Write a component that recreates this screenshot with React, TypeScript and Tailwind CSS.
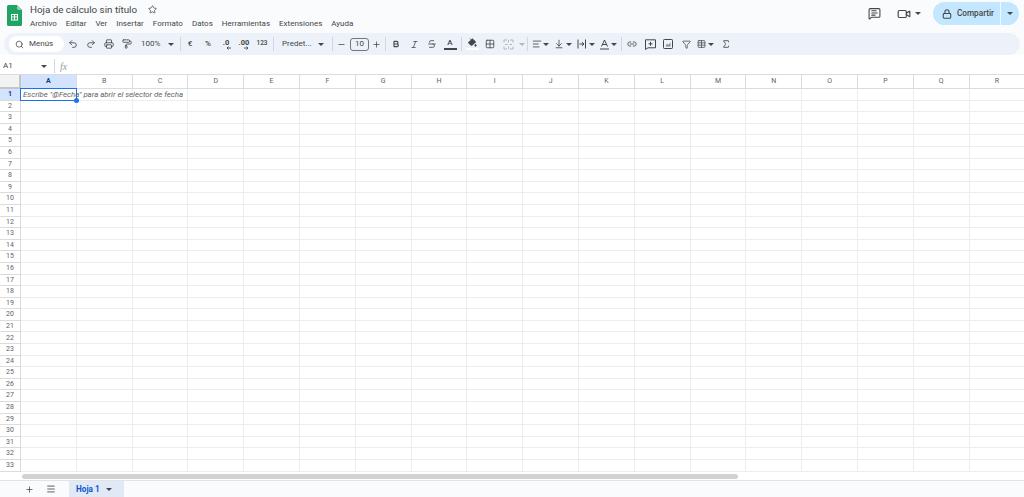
import {
  Undo2, Redo2, Printer, PaintRoller, Search, Star, Bold, Italic, Strikethrough, PaintBucket, Grid2x2,
  AlignLeft, ArrowDownToLine, Link2, Filter, Table, Sigma, Minus, Plus, Lock, Video, MessageSquareText, Menu,
} from "lucide-react";
import type { ReactNode } from "react";

const font = "font-['Roboto','Liberation_Sans',sans-serif]";
const columns = "ABCDEFGHIJKLMNOPQR".split("");
const rows = Array.from({ length: 33 }, (_, i) => i + 1);
const menus = ["Archivo", "Editar", "Ver", "Insertar", "Formato", "Datos", "Herramientas", "Extensiones", "Ayuda"];

function Caret({ className = "" }: { className?: string }) {
  return <span className={`h-0 w-0 shrink-0 border-x-[3px] border-t-[3px] border-x-transparent border-t-[#444746] ${className}`} />;
}

function Tool({ w = "w-[18px]", children }: { w?: string; children: ReactNode }) {
  return <div className={`flex h-4 shrink-0 items-center justify-center text-[#444746] ${w}`}>{children}</div>;
}

function Sep({ className = "" }: { className?: string }) {
  return <div className={`h-[14px] w-px shrink-0 bg-[#d3d6da] ${className}`} />;
}

function SheetsLogo() {
  return (
    <svg width="15" height="21" viewBox="0 0 15 21" className="shrink-0">
      <path d="M1.5 0H10l5 5v14.5a1.5 1.5 0 0 1-1.5 1.5h-12A1.5 1.5 0 0 1 0 19.5v-18A1.5 1.5 0 0 1 1.5 0Z" fill="#1fa463" />
      <path d="M10 0l5 5h-3.6A1.4 1.4 0 0 1 10 3.6Z" fill="#8ed1b1" />
      <path d="M4 9h7v6.5H4Zm1 1v1.6h2V10Zm3 0v1.6h2V10Zm-3 2.6v1.9h2v-1.9Zm3 0v1.9h2v-1.9Z" fill="#fff" fillRule="evenodd" />
    </svg>
  );
}

function DecimalIcon({ label, arrow }: { label: string; arrow: "left" | "right" }) {
  return (
    <div className="relative flex h-[12px] w-[14px] justify-center">
      <span className="text-[7.5px] font-bold leading-[9px]">{label}</span>
      <svg width="5" height="4" viewBox="0 0 5 4" className="absolute bottom-0 right-[2px]" fill="none" stroke="currentColor" strokeWidth="0.9">
        {arrow === "left" ? <path d="M5 2H1M2.500.5 1 2l1.500 1.500" /> : <path d="M0 2h4M2.500.5 4 2 2.500 3.500" />}
      </svg>
    </div>
  );
}

function MergeIcon() {
  return (
    <svg width="11" height="11" viewBox="0 0 11 11" fill="none" stroke="#b4b6b8" strokeWidth="1">
      <path d="M1 3.500V1h3M7 1h3v2.500M10 7.500V10H7M4 10H1V7.500" />
      <path d="M5.500 1v2.500M5.500 7.500V10M2 5.500h2.500M6.500 5.500H9" />
    </svg>
  );
}

function WrapIcon() {
  return (
    <svg width="10" height="10" viewBox="0 0 10 10" fill="none" stroke="currentColor" strokeWidth="1">
      <path d="M1 .5v9M8.500 .5v9M2.500 5h4.500M5 3.200 7 5 5 6.800" />
    </svg>
  );
}

function RotateIcon() {
  return (
    <svg width="11" height="11" viewBox="0 0 11 11" fill="none" stroke="currentColor" strokeWidth="1">
      <path d="M2.500 7.500 5.500 1l3 6.500M3.500 5.500h4M1 10h9" />
    </svg>
  );
}

function CommentIcon() {
  return (
    <svg width="11" height="11" viewBox="0 0 11 11" fill="none" stroke="currentColor" strokeWidth="1">
      <path d="M.5.800h10v8H3L.5 10.500ZM5.500 2.800v4M3.500 4.800h4" />
    </svg>
  );
}

function ChartIcon() {
  return (
    <svg width="10" height="10" viewBox="0 0 10 10" fill="none" stroke="currentColor" strokeWidth="1">
      <rect x=".5" y=".5" width="9" height="9" rx=".8" />
      <path d="M2.500 7.500l1.500-3 1.200 1.500L7.500 3.500v4Z" fill="currentColor" fillOpacity="0.6" stroke="none" />
    </svg>
  );
}

function Header() {
  return (
    <header className="flex h-[32px] shrink-0">
      <div className="ml-[7px] mt-[5px]">
        <SheetsLogo />
      </div>
      <div className="ml-[8px] flex flex-col">
        <div className="mt-[2px] flex h-[15px] items-center">
          <span className="text-[9.8px] leading-none text-[#444746]">Hoja de cálculo sin título</span>
          <Star size={9} strokeWidth={2} className="ml-[11px] text-[#444746]" />
        </div>
        <nav className="flex h-[13px] items-center gap-[9px] text-[8px] text-[#444746]">
          {menus.map((m) => (
            <span key={m}>{m}</span>
          ))}
        </nav>
      </div>
      <div className="ml-auto mr-[5px] mt-[2px] flex h-[23px] items-center">
        <MessageSquareText size={13} className="text-[#444746]" />
        <Video size={14} className="ml-[16px] text-[#444746]" />
        <Caret className="ml-[4px]" />
        <div className="ml-[12px] flex h-[23px] w-[86px] items-center rounded-full bg-[#c2e7ff] text-[8.2px] font-medium text-[#444746]">
          <Lock size={10} strokeWidth={2.5} className="ml-[9px]" />
          <span className="ml-[5px]">Compartir</span>
          <div className="ml-auto flex h-full w-[19px] items-center justify-center border-l border-white/70">
            <Caret />
          </div>
        </div>
      </div>
    </header>
  );
}

function Toolbar() {
  const s = 10;
  return (
    <div className="mx-[4px] mt-[1px] flex h-[22px] shrink-0 items-center rounded-[11px] bg-[#edf2fa] pl-[5px] text-[#444746]">
      <div className="flex h-[16px] w-[55px] shrink-0 items-center rounded-full bg-white pl-[6px] text-[8px]">
        <Search size={9} />
        <span className="ml-[5px]">Menús</span>
      </div>
      <Tool><Undo2 size={s} /></Tool>
      <Tool><Redo2 size={s} /></Tool>
      <Tool><Printer size={s} /></Tool>
      <Tool><PaintRoller size={s} /></Tool>
      <div className="ml-[5px] flex w-[36px] shrink-0 items-center text-[8px]">
        <span className="w-[21px]">100%</span>
        <Caret className="ml-[6px]" />
      </div>
      <Sep className="ml-[3px]" />
      <Tool><span className="text-[8px] font-medium">€</span></Tool>
      <Tool><span className="text-[8px] font-medium">%</span></Tool>
      <Tool><DecimalIcon label=".0" arrow="left" /></Tool>
      <Tool><DecimalIcon label=".00" arrow="right" /></Tool>
      <Tool><span className="text-[6.5px] font-medium">123</span></Tool>
      <Sep className="ml-[2px] mr-[8px]" />
      <div className="flex w-[50px] shrink-0 items-center text-[8px]">
        <span className="w-[31px] whitespace-nowrap">Predet...</span>
        <Caret className="ml-[5px]" />
      </div>
      <Sep />
      <Tool w="w-[16px]"><Minus size={9} /></Tool>
      <div className="ml-[1px] flex h-[13px] w-[19px] shrink-0 items-center justify-center rounded-[3px] border border-[#747775] text-[8px]">10</div>
      <Tool w="w-[15px]"><Plus size={9} /></Tool>
      <Sep className="ml-[1px] mr-[1px]" />
      <Tool><Bold size={8} strokeWidth={3.5} /></Tool>
      <Tool><Italic size={9} /></Tool>
      <Tool><Strikethrough size={s} /></Tool>
      <Tool>
        <div className="flex flex-col items-center text-[8px] font-medium leading-none">
          <span>A</span>
          <span className="mt-[1px] h-[2px] w-[13px] bg-[#444746]" />
        </div>
      </Tool>
      <Sep className="ml-[2px] mr-[1px]" />
      <Tool>
        <div className="flex flex-col items-center">
          <PaintBucket size={9} fill="#444746" />
          <span className="mt-[1px] h-[2px] w-[13px] bg-white" />
        </div>
      </Tool>
      <Tool><Grid2x2 size={s} /></Tool>
      <Tool><MergeIcon /></Tool>
      <Caret className="ml-[2px] border-t-[#b4b6b8]" />
      <Sep className="ml-[2px] mr-[4px]" />
      <div className="flex w-[22px] shrink-0 items-center"><AlignLeft size={s} /><Caret className="ml-[1px]" /></div>
      <div className="flex w-[23px] shrink-0 items-center"><ArrowDownToLine size={s} /><Caret className="ml-[2px]" /></div>
      <div className="flex w-[22px] shrink-0 items-center"><WrapIcon /><Caret className="ml-[2px]" /></div>
      <div className="flex w-[18px] shrink-0 items-center"><RotateIcon /><Caret className="ml-[1px]" /></div>
      <Sep className="ml-[4px] mr-[1px]" />
      <Tool><Link2 size={s} /></Tool>
      <Tool><CommentIcon /></Tool>
      <Tool><ChartIcon /></Tool>
      <Tool><Filter size={9} /></Tool>
      <div className="flex w-[19px] shrink-0 items-center pl-[2px]"><Table size={s} /><Caret className="ml-[2px]" /></div>
      <Tool w="w-[24px]"><Sigma size={s} /></Tool>
    </div>
  );
}

function FormulaBar() {
  return (
    <div className="mt-[3px] flex h-[16px] shrink-0 items-center text-[#444746]">
      <span className="ml-[3px] w-[38px] text-[8px]">A1</span>
      <Caret />
      <Sep className="ml-[7px] mr-[5px]" />
      <span className="font-['Liberation_Serif',serif] text-[10px] italic text-[#9aa0a6]">fx</span>
    </div>
  );
}

function Grid() {
  return (
    <div className="flex min-h-0 flex-1 flex-col overflow-hidden border-t border-[#dadce0]">
      <div className="flex h-[14px] shrink-0">
        <div className="w-[21px] shrink-0 border-b-[2px] border-r-[2px] border-[#c4c7c5] bg-[#f1f3f4]" />
        {columns.map((c, i) => (
          <div
            key={c}
            className={`flex w-[55.8px] shrink-0 items-center justify-center border-b border-r border-[#dadce0] text-[7px] ${
              i === 0 ? "bg-[#d3e3fd] font-bold text-[#0b3c8c]" : "text-[#5f6368]"
            }`}
          >
            {c}
          </div>
        ))}
      </div>
      {rows.map((r) => (
        <div key={r} className="flex h-[11.6px] shrink-0">
          <div
            className={`flex w-[21px] shrink-0 items-center justify-center border-b border-r border-[#dadce0] text-[7px] ${
              r === 1 ? "bg-[#d3e3fd] font-bold text-[#0b3c8c]" : "text-[#5f6368]"
            }`}
          >
            {r}
          </div>
          {columns.map((c, i) => (
            <div key={c} className="relative w-[55.8px] shrink-0 border-b border-r border-[#ebedef]">
              {r === 1 && i === 0 && (
                <>
                  <div className="absolute -left-px -top-px z-10 h-[12.6px] w-[56.8px] border-[1.5px] border-[#1a73e8]" />
                  <div className="absolute -bottom-[3px] -right-[3px] z-20 h-[5px] w-[5px] rounded-full bg-[#1a73e8]" />
                  <span className="absolute left-[2px] top-0 z-20 whitespace-nowrap text-[7.8px] italic leading-[11px] text-[#5f6368]">
                    Escribe "@Fecha" para abrir el selector de fecha
                  </span>
                </>
              )}
            </div>
          ))}
        </div>
      ))}
    </div>
  );
}

function Bottom() {
  return (
    <>
      <div className="flex h-[8px] shrink-0 items-center pl-[22px]">
        <div className="h-[5px] w-[716px] rounded-full bg-[#d0d2d4]" />
      </div>
      <div className="flex h-[17px] shrink-0 items-center border-t border-[#e3e3e3] bg-[#f9fbfd] text-[#444746]">
        <Plus size={9} className="ml-[25px]" />
        <Menu size={10} className="ml-[12px]" />
        <div className="ml-[13px] flex h-full w-[55px] items-center bg-[#e1e9f7] pl-[7px] text-[8.2px] font-bold text-[#0b57d0]">
          Hoja 1
          <Caret className="ml-[6px] border-t-[#0b57d0]" />
        </div>
      </div>
    </>
  );
}

export default function App() {
  return (
    <div className={`flex h-[497px] w-[1024px] flex-col overflow-hidden bg-[#f9fbfd] ${font}`}>
      <Header />
      <Toolbar />
      <div className="flex min-h-0 flex-1 flex-col bg-white">
        <FormulaBar />
        <Grid />
        <Bottom />
      </div>
    </div>
  );
}
